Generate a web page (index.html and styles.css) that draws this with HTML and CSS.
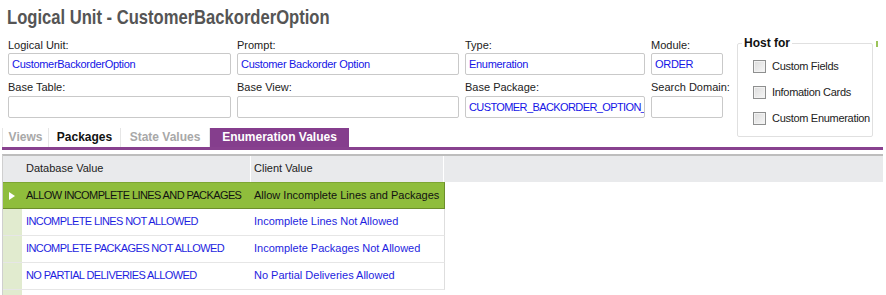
FILE: index.html
```html
<!DOCTYPE html>
<html lang="en">
<head>
    <meta charset="UTF-8">
    <title>Logical Unit - CustomerBackorderOption</title>
    <link rel="stylesheet" href="styles.css">
</head>
<body>
    <h1 class="title"><span class="title-text">Logical Unit - CustomerBackorderOption</span></h1>

    <div class="form-area">
        <div class="fields">
            <label class="lbl">Logical Unit:</label>
            <label class="lbl">Prompt:</label>
            <label class="lbl">Type:</label>
            <label class="lbl">Module:</label>

            <div class="field">CustomerBackorderOption</div>
            <div class="field">Customer Backorder Option</div>
            <div class="field">Enumeration</div>
            <div class="field">ORDER</div>

            <label class="lbl lbl-2">Base Table:</label>
            <label class="lbl lbl-2">Base View:</label>
            <label class="lbl lbl-2">Base Package:</label>
            <label class="lbl lbl-2">Search Domain:</label>

            <div class="field"></div>
            <div class="field"></div>
            <div class="field tight">CUSTOMER_BACKORDER_OPTION_API</div>
            <div class="field"></div>
        </div>

        <fieldset class="host">
            <legend>Host for</legend>
            <div class="check"><span class="box"></span>Custom Fields</div>
            <div class="check"><span class="box"></span>Infomation Cards</div>
            <div class="check"><span class="box"></span>Custom Enumeration</div>
        </fieldset>
        <span class="edge-mark"></span>
    </div>

    <div class="tabs">
        <div class="tab tab-views">Views</div>
        <div class="tab tab-packages active-dark">Packages</div>
        <div class="tab tab-states">State Values</div>
        <div class="tab tab-enum selected">Enumeration Values</div>
    </div>

    <div class="grid">
        <div class="grid-head">
            <div class="ind"></div>
            <div class="cell col-db">Database Value</div>
            <div class="cell col-client">Client Value</div>
        </div>

        <div class="row current">
            <div class="ind"><span class="arrow"></span></div>
            <div class="cell col-db caps">ALLOW INCOMPLETE LINES AND PACKAGES</div>
            <div class="cell col-client">Allow Incomplete Lines and Packages</div>
        </div>
        <div class="row">
            <div class="ind"></div>
            <div class="cell col-db caps">INCOMPLETE LINES NOT ALLOWED</div>
            <div class="cell col-client">Incomplete Lines Not Allowed</div>
        </div>
        <div class="row">
            <div class="ind"></div>
            <div class="cell col-db caps">INCOMPLETE PACKAGES NOT ALLOWED</div>
            <div class="cell col-client">Incomplete Packages Not Allowed</div>
        </div>
        <div class="row">
            <div class="ind"></div>
            <div class="cell col-db caps">NO PARTIAL DELIVERIES ALLOWED</div>
            <div class="cell col-client">No Partial Deliveries Allowed</div>
        </div>
        <div class="row filler">
            <div class="ind"></div>
        </div>
    </div>
</body>
</html>
```

FILE: styles.css
```css
body {
    margin: 0;
    font-family: "Liberation Sans", Arial, sans-serif;
    font-size: 11px;
    color: #222;
    background-color: #fff;
    overflow: hidden;
}

.title {
    margin: 0;
    padding: 4px 7px 0;
    height: 32px;
    font-family: "Liberation Sans", Arial, sans-serif;
    font-size: 21px;
    line-height: 26px;
    font-weight: bold;
    color: #555;
    white-space: nowrap;
}

/* the original face is a condensed grotesque, so squeeze Arial to match */
.title-text {
    display: inline-block;
    transform: scaleX(0.79);
    transform-origin: left center;
}

.form-area {
    display: flex;
    align-items: flex-start;
    padding: 0 8px;
}

.fields {
    display: grid;
    grid-template-columns: 223px 222px 180px 72px;
    grid-template-rows: 17px 22px 21px 22px;
    column-gap: 6px;
}

.lbl {
    line-height: 15px;
    padding-top: 2px;
    color: #222;
    white-space: nowrap;
}

.lbl-2 {
    padding-top: 5px;
}

.field {
    box-sizing: border-box;
    height: 22px;
    border: 1px solid #c9c9c9;
    border-radius: 2px;
    padding: 0 3px;
    line-height: 20px;
    color: #1414e6;
    letter-spacing: -0.3px;
    white-space: nowrap;
    overflow: hidden;
}

.tight {
    letter-spacing: -0.6px;
}

.host {
    box-sizing: border-box;
    width: 145px;
    height: 101px;
    margin: 0 0 -19px 14px;
    padding: 3px 0 0 15px;
    border: 1px solid #e0e0e0;
    border-radius: 2px;
}

.host legend {
    padding: 0 2px;
    margin-left: -11px;
    font-size: 12px;
    font-weight: bold;
    color: #111;
}

.check {
    display: flex;
    align-items: center;
    height: 26px;
    font-size: 11px;
    color: #222;
    white-space: nowrap;
    letter-spacing: -0.3px;
}

.box {
    box-sizing: border-box;
    flex-shrink: 0;
    width: 13px;
    height: 13px;
    margin-right: 6px;
    border: 1px solid #8e8f8f;
    background: linear-gradient(135deg, #dcdcdc, #f6f6f6);
    box-shadow: inset 0 0 0 1px #f2f2f2;
}

.edge-mark {
    width: 2px;
    height: 6px;
    margin: 5px 0 0 3px;
    background-color: #9cc45a;
}

.tabs {
    display: flex;
    margin: 10px 3px 0 2px;
    height: 19px;
    border-bottom: 3px solid #88418f;
}

.tab {
    box-sizing: border-box;
    height: 19px;
    line-height: 19px;
    text-align: center;
    font-size: 12px;
    font-weight: bold;
    color: #a8a8a8;
    border-right: 1px solid #e6e6e6;
}

.tab-views {
    width: 47px;
    border-left: 1px solid #e6e6e6;
}

.tab-packages {
    width: 72px;
}

.tab-states {
    width: 89px;
}

.tab-enum {
    width: 139px;
}

.active-dark {
    color: #111;
}

.selected {
    background-color: #853e8d;
    color: #fff;
    border-right: none;
}

.grid {
    margin: 4px 3px 0 2px;
    border-top: 2px solid #bdbdbd;
    border-left: 1px solid #cfcfcf;
}

.grid-head,
.row {
    display: flex;
    height: 27px;
    box-sizing: border-box;
}

.grid-head {
    height: 26px;
    background-color: #e9eaec;
}

.ind {
    width: 19px;
    flex-shrink: 0;
}

.cell {
    box-sizing: border-box;
    padding-left: 4px;
    line-height: 25px;
    white-space: nowrap;
    overflow: hidden;
}

.col-db {
    width: 229px;
}

.col-client {
    width: 193px;
    padding-left: 3px;
}

.grid-head .col-db,
.grid-head .col-client {
    border-right: 1px solid #fff;
    color: #222;
}

.row {
    width: 442px;
    border-bottom: 1px solid #e6e6e6;
    border-right: 1px solid #dedede;
    color: #1e1ee0;
}

.row .ind {
    background-color: #e1ebcf;
}

.caps {
    letter-spacing: -0.6px;
}

.current {
    background-color: #8fbd3c;
    border-top: 1px solid #7da632;
    border-bottom: 1px solid #6c8e2b;
    border-right: 1px solid #6c8e2b;
    color: #111;
}

.current .ind {
    background-color: transparent;
    display: flex;
    align-items: center;
    justify-content: center;
}

.arrow {
    width: 0;
    height: 0;
    border-top: 4px solid transparent;
    border-bottom: 4px solid transparent;
    border-left: 6px solid #fff;
    margin-left: -2px;
}

.filler {
    height: 20px;
    border: none;
}
```
